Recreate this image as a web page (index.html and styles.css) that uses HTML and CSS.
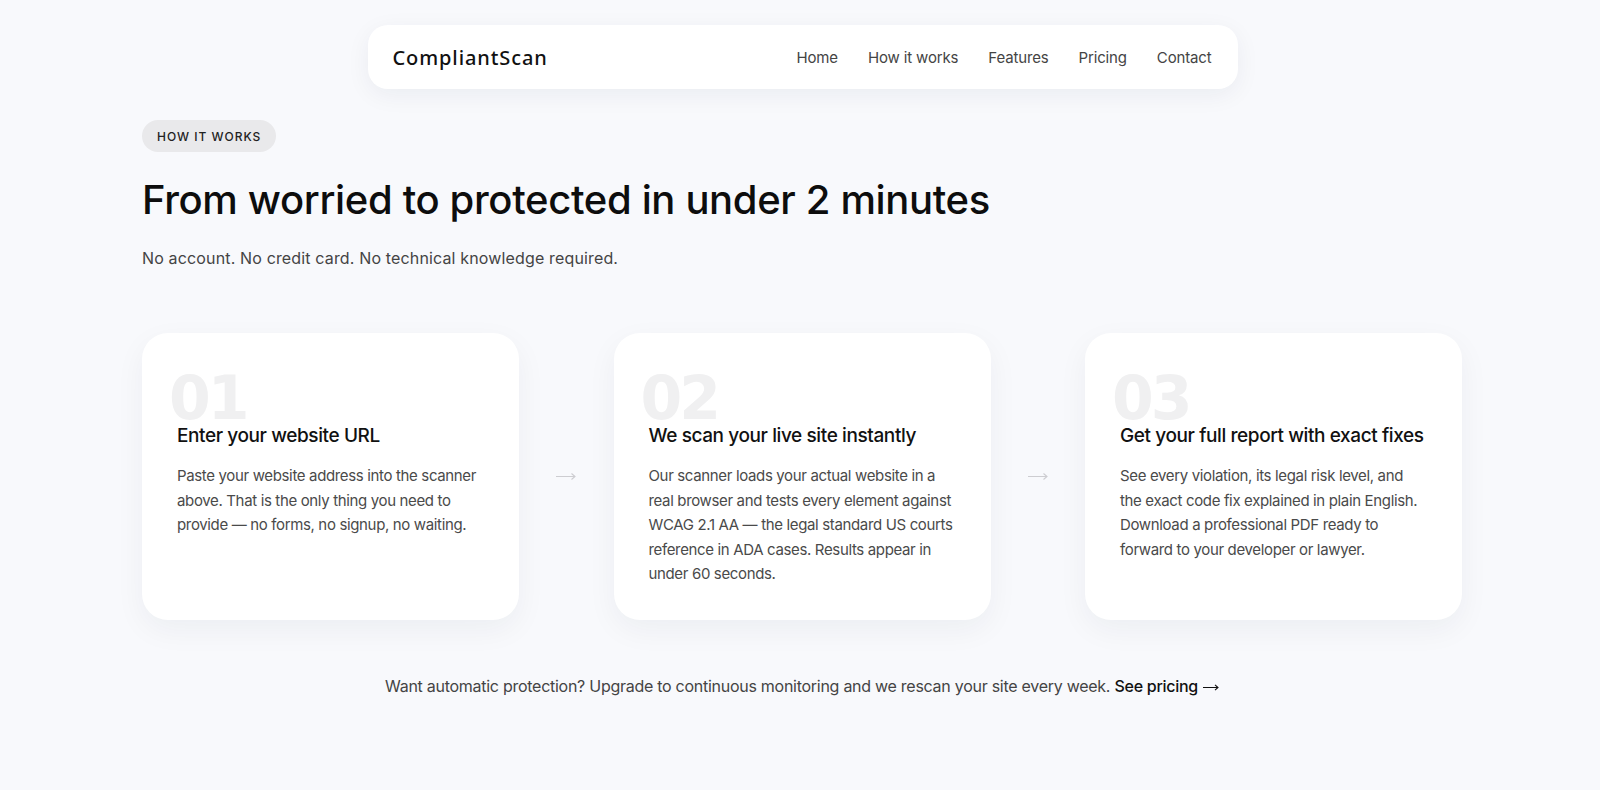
FILE: index.html
```html
<!DOCTYPE html>
<html lang="en">
<head>
<meta charset="utf-8">
<title>CompliantScan — How it works</title>
<link rel="stylesheet" href="styles.css">
</head>
<body>
<header class="topbar">
  <nav class="nav">
    <a class="logo" href="#">CompliantScan</a>
    <ul class="nav-links">
      <li><a href="#">Home</a></li>
      <li><a href="#">How it works</a></li>
      <li><a href="#">Features</a></li>
      <li><a href="#">Pricing</a></li>
      <li><a href="#">Contact</a></li>
    </ul>
  </nav>
</header>

<main class="section">
  <span class="pill">HOW IT WORKS</span>
  <h1 class="headline">From worried to protected in under 2 minutes</h1>
  <p class="lead">No account. No credit card. No technical knowledge required.</p>

  <div class="steps">
    <article class="card">
      <span class="num">01</span>
      <h2 class="card-title">Enter your website URL</h2>
      <p class="card-text">Paste your website address into the scanner above. That is the only thing you need to provide — no forms, no signup, no waiting.</p>
    </article>
    <div class="arrow"><svg width="20" height="9" viewBox="0 0 20 9" aria-hidden="true"><path d="M0 4.5H19M15.5 1.5L19 4.5L15.5 7.5" fill="none" stroke="#cdcdd1" stroke-width="1.1"/></svg></div>
    <article class="card">
      <span class="num">02</span>
      <h2 class="card-title">We scan your live site instantly</h2>
      <p class="card-text">Our scanner loads your actual website in a real browser and tests every element against WCAG 2.1 AA — the legal standard US courts reference in ADA cases. Results appear in under 60 seconds.</p>
    </article>
    <div class="arrow"><svg width="20" height="9" viewBox="0 0 20 9" aria-hidden="true"><path d="M0 4.5H19M15.5 1.5L19 4.5L15.5 7.5" fill="none" stroke="#cdcdd1" stroke-width="1.1"/></svg></div>
    <article class="card">
      <span class="num">03</span>
      <h2 class="card-title">Get your full report with exact fixes</h2>
      <p class="card-text">See every violation, its legal risk level, and the exact code fix explained in plain English. Download a professional PDF ready to forward to your developer or lawyer.</p>
    </article>
  </div>

  <p class="cta">Want automatic protection? Upgrade to continuous monitoring and we rescan your site every week. <a href="#">See pricing <svg class="cta-arrow" width="16" height="9" viewBox="0 0 16 9" aria-hidden="true"><path d="M0 4.5H15M12 1.8L15 4.5L12 7.2" fill="none" stroke="#111" stroke-width="1.1"/></svg></a></p>
</main>
</body>
</html>
```

FILE: styles.css
```css
* { box-sizing: border-box; }
html, body { margin: 0; padding: 0; }
body {
  background: #f8f9fc;
  font-family: Inter, "Liberation Sans", sans-serif;
  color: #111;
  min-height: 790px;
}
a { color: inherit; text-decoration: none; }

.topbar {
  padding: 25px 0 0 5px;
}
.nav {
  width: 870px;
  height: 64px;
  margin: 0 auto;
  padding: 0 26px 0 25px;
  background: #fff;
  border-radius: 20px;
  box-shadow: 0 6px 24px rgba(20, 30, 60, 0.06);
  display: flex;
  align-items: center;
  justify-content: space-between;
}
.logo {
  font-family: "Noto Sans", Inter, sans-serif;
  font-size: 20px;
  font-weight: 500;
  color: #111;
  letter-spacing: 0.9px;
}
.nav-links {
  list-style: none;
  margin: 0;
  padding: 0;
  display: flex;
  gap: 30px;
}
.nav-links a {
  font-size: 15px;
  color: #444;
  letter-spacing: -0.15px;
}

.section {
  width: 1320px;
  margin: 0 0 0 calc(50% - 658px);
  padding-top: 31px;
}
.pill {
  display: inline-flex;
  align-items: center;
  height: 32px;
  padding: 0 15px;
  border-radius: 16px;
  background: #e9e9eb;
  font-size: 12px;
  font-weight: 500;
  letter-spacing: 1px;
  color: #222;
}
.headline {
  margin: 24px 0 0;
  font-size: 40px;
  line-height: 48px;
  font-weight: 500;
  letter-spacing: -0.35px;
  color: #0d0d0d;
}
.lead {
  margin: 22px 0 0;
  font-size: 16px;
  line-height: 24px;
  color: #444;
  letter-spacing: 0.15px;
}

.steps {
  margin-top: 63px;
  display: grid;
  grid-template-columns: 377px 1fr 377px 1fr 377px;
  align-items: stretch;
}
.card {
  position: relative;
  min-height: 287px;
  background: #fff;
  border-radius: 26px;
  padding: 90px 34px 28px 35px;
  box-shadow: 0 10px 30px rgba(20, 30, 60, 0.05);
}
.num {
  position: absolute;
  top: 43px;
  left: 27px;
  font-family: "DejaVu Sans", sans-serif;
  font-size: 60px;
  line-height: 44px;
  font-weight: 700;
  color: #f0f0f1;
  letter-spacing: -3px;
}
.card-title {
  position: relative;
  margin: 0;
  font-size: 19px;
  line-height: 26px;
  font-weight: 500;
  color: #111;
  letter-spacing: -0.4px;
  white-space: nowrap;
}
.card-text {
  position: relative;
  margin: 15px 0 0;
  font-size: 15px;
  line-height: 24.5px;
  color: #4a4a4a;
  letter-spacing: -0.35px;
}
.arrow {
  display: flex;
  align-items: center;
  justify-content: center;
}
.arrow svg { display: block; }

.cta {
  margin: 54px 0 0;
  text-align: center;
  font-size: 16px;
  line-height: 24px;
  color: #444;
  letter-spacing: -0.27px;
}
.cta a {
  color: #111;
  font-weight: 500;
}
.cta-arrow {
  display: inline-block;
  vertical-align: middle;
  margin-left: 1px;
}
```
